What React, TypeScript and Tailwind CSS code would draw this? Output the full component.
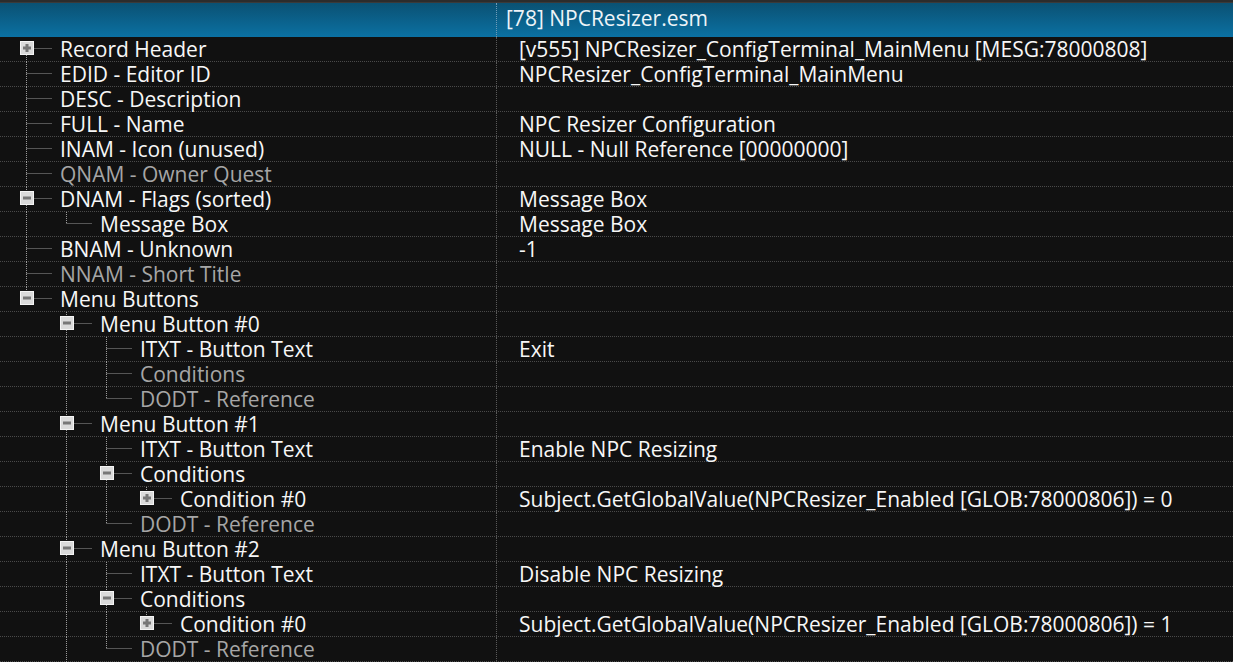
import { Fragment } from 'react';

type Node = {
  label: string;
  value?: string;
  gray?: boolean;
  expanded?: boolean;
  collapsed?: boolean;
  children?: Node[];
};

const tree: Node[] = [
  { label: 'Record Header', value: '[v555] NPCResizer_ConfigTerminal_MainMenu [MESG:78000808]', collapsed: true },
  { label: 'EDID - Editor ID', value: 'NPCResizer_ConfigTerminal_MainMenu' },
  { label: 'DESC - Description' },
  { label: 'FULL - Name', value: 'NPC Resizer Configuration' },
  { label: 'INAM - Icon (unused)', value: 'NULL - Null Reference [00000000]' },
  { label: 'QNAM - Owner Quest', gray: true },
  {
    label: 'DNAM - Flags (sorted)',
    value: 'Message Box',
    expanded: true,
    children: [{ label: 'Message Box', value: 'Message Box' }],
  },
  { label: 'BNAM - Unknown', value: '-1' },
  { label: 'NNAM - Short Title', gray: true },
  {
    label: 'Menu Buttons',
    expanded: true,
    children: [
      {
        label: 'Menu Button #0',
        expanded: true,
        children: [
          { label: 'ITXT - Button Text', value: 'Exit' },
          { label: 'Conditions', gray: true },
          { label: 'DODT - Reference', gray: true },
        ],
      },
      {
        label: 'Menu Button #1',
        expanded: true,
        children: [
          { label: 'ITXT - Button Text', value: 'Enable NPC Resizing' },
          {
            label: 'Conditions',
            expanded: true,
            children: [
              {
                label: 'Condition #0',
                collapsed: true,
                value: 'Subject.GetGlobalValue(NPCResizer_Enabled [GLOB:78000806]) = 0',
              },
            ],
          },
          { label: 'DODT - Reference', gray: true },
        ],
      },
      {
        label: 'Menu Button #2',
        expanded: true,
        children: [
          { label: 'ITXT - Button Text', value: 'Disable NPC Resizing' },
          {
            label: 'Conditions',
            expanded: true,
            children: [
              {
                label: 'Condition #0',
                collapsed: true,
                value: 'Subject.GetGlobalValue(NPCResizer_Enabled [GLOB:78000806]) = 1',
              },
            ],
          },
          { label: 'DODT - Reference', gray: true },
        ],
      },
      // more buttons are below the fold
      { label: 'Menu Button #3', expanded: true },
    ],
  },
];

type Row = { node: Node; depth: number; first: boolean; last: boolean; guides: boolean[] };

const flatten = (nodes: Node[], depth: number, guides: boolean[], rows: Row[]) => {
  nodes.forEach((node, i) => {
    const last = i === nodes.length - 1;
    rows.push({ node, depth, first: depth === 0 && i === 0, last, guides });
    if (node.children) flatten(node.children, depth + 1, [...guides, !last], rows);
  });
  return rows;
};

const rows = flatten(tree, 0, [], []).slice(0, 25);

const DOT = '#9a9a9a';

const TreeLines = ({ row }: { row: Row }) => {
  const cx = 26.5 + row.depth * 40;
  const hasBox = row.node.expanded || row.node.collapsed;
  return (
    <svg height="25" className="shrink-0" style={{ width: 60 + row.depth * 40 }}>
      {row.guides.map((on, k) =>
        on ? (
          <line key={k} x1={26.5 + k * 40} y1={0} x2={26.5 + k * 40} y2={25} stroke={DOT} strokeDasharray="1 1" />
        ) : null
      )}
      <line
        x1={cx}
        y1={row.first ? 12 : 0}
        x2={cx}
        y2={row.last ? 12 : 25}
        stroke={DOT}
        strokeDasharray="1 1"
      />
      <line x1={cx} y1={11.5} x2={cx + 26} y2={11.5} stroke={DOT} strokeDasharray="1 1" />
      {hasBox && (
        <g>
          <rect x={cx - 6} y={4.5} width={13} height={13} fill="#dadada" stroke="#f4f4f4" />
          <rect x={cx - 3.5} y={9.5} width={8} height={3} fill="#777777" />
          {row.node.collapsed && <rect x={cx - 1} y={7} width={3} height={8} fill="#777777" />}
        </g>
      )}
    </svg>
  );
};

export default function App() {
  return (
    <div
      className="w-[1233px] h-[662px] overflow-hidden bg-[#111111] text-[#f7f7f7] text-[21px] leading-[25px]"
      style={{ fontFamily: '"Open Sans", "Noto Sans", sans-serif' }}
    >
      <div className="h-[3px] bg-[#2c2c2c] border-b border-[#3a3a3a]" />
      <div className="flex h-[34px] bg-gradient-to-b from-[#0a5173] to-[#0b71a3]">
        <div className="w-[497px] border-r border-dotted border-[#6f9cb8]" />
        <div className="pl-[9px] pt-[3px] text-[#eef4f8]">[78] NPCResizer.esm</div>
      </div>
      {rows.map((row, i) => (
        <Fragment key={i}>
          <div className="flex h-[25px] border-b border-dotted border-[#4a4a4a]">
            <div className="w-[497px] shrink-0 flex border-r border-dotted border-[#5a5a5a] whitespace-nowrap">
              <TreeLines row={row} />
              <span className={row.node.gray ? 'text-[#a6a6a6]' : ''}>{row.node.label}</span>
            </div>
            <div className="pl-[22px] whitespace-nowrap">{row.node.value}</div>
          </div>
        </Fragment>
      ))}
    </div>
  );
}
